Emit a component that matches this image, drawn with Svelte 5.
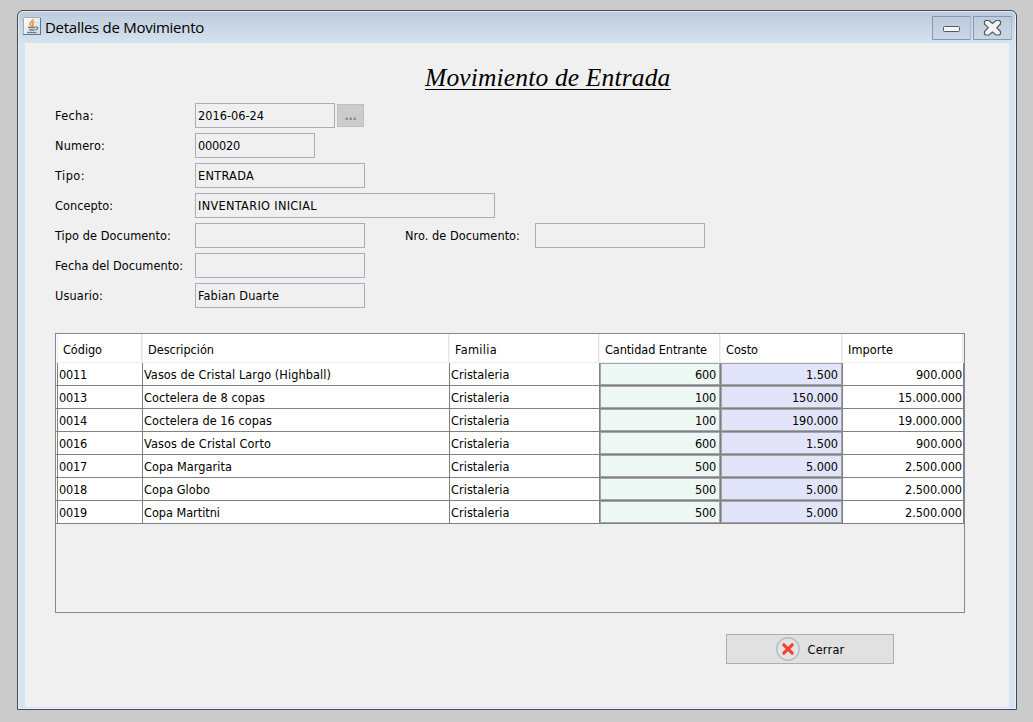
<script>
  const fields = [
    { label: 'Fecha:', lw: 39, value: '2016-06-24', vw: 66, width: 140, picker: true },
    { label: 'Numero:', lw: 50, value: '000020', vw: 42, width: 120 },
    { label: 'Tipo:', lw: 30, value: 'ENTRADA', vw: 56, width: 170 },
    { label: 'Concepto:', lw: 58, value: 'INVENTARIO INICIAL', vw: 119, width: 300 },
    { label: 'Tipo de Documento:', lw: 116, value: '', width: 170, extra: true },
    { label: 'Fecha del Documento:', lw: 128, value: '', width: 170 },
    { label: 'Usuario:', lw: 48, value: 'Fabian Duarte', vw: 81, width: 170 }
  ];
  const heads = [
    ['Código', 39], ['Descripción', 66], ['Familia', 42],
    ['Cantidad Entrante', 102], ['Costo', 32], ['Importe', 45]
  ];
  const rows = [
    ['0011', 'Vasos de Cristal Largo (Highball)', 187, '600', '1.500', '900.000'],
    ['0013', 'Coctelera de 8 copas', 121, '100', '150.000', '15.000.000'],
    ['0014', 'Coctelera de 16 copas', 128, '100', '190.000', '19.000.000'],
    ['0016', 'Vasos de Cristal Corto', 127, '600', '1.500', '900.000'],
    ['0017', 'Copa Margarita', 88, '500', '5.000', '2.500.000'],
    ['0018', 'Copa Globo', 66, '500', '5.000', '2.500.000'],
    ['0019', 'Copa Martitni', 76, '500', '5.000', '2.500.000']
  ];
  const numberWidth = (s) => [...s].reduce((w, c) => w + (c === '.' ? 4 : 7), 0);

  // Spaces the letters so that the text fills the given width.
  function fit(node, width) {
    if (!width) return;
    const natural = node.getBoundingClientRect().width;
    const spacing = (width - natural) / node.textContent.length;
    node.style.letterSpacing = spacing + 'px';
  }
</script>

<div class="desktop">
  <div class="window">
    <header class="titlebar">
      <svg class="java" width="18" height="18" viewBox="0 0 18 18">
        <defs>
          <linearGradient id="jg" x1="0" y1="0" x2="1" y2="1">
            <stop offset="0" stop-color="#fff" /><stop offset="1" stop-color="#d3d8dc" />
          </linearGradient>
        </defs>
        <rect x=".5" y=".5" width="17" height="17" rx="1" fill="url(#jg)" stroke="#9aabba" />
        <path d="M0 17.500h18M17.500 1v16" stroke="#597890" />
        <path d="M10 2.200C10 4.500 6.800 5 7 7c.1 1.100 1.200 1.500 1.500 2.500M11.500 4.800C9.500 5.800 9 6.600 9.800 7.500c.5.700.2 1.300-.5 1.800" fill="none" stroke="#ef8a2c" stroke-width="1.500" />
        <path d="M5 10.500h7.500M6.200 13h5.500" fill="none" stroke="#5f8198" stroke-width="1.500" />
        <path d="M4 15.500h9.500" fill="none" stroke="#5f8198" stroke-width="1.300" />
        <path d="M12.500 10c3.300-.5 3 2.600-.2 3" fill="none" stroke="#5f8198" stroke-width="1.200" />
      </svg>
      <h1><span use:fit={159}>Detalles de Movimiento</span></h1>
      <div class="controls">
        <button aria-label="Minimizar">
          <svg width="38" height="22" viewBox="0 0 38 22">
            <rect x="10.500" y="9.500" width="16" height="5" rx="1" fill="#f6f6f6" stroke="#54586c" />
          </svg>
        </button>
        <button aria-label="Cerrar ventana">
          <svg width="38" height="22" viewBox="0 0 38 22">
            <path d="M11.500 3.500H15L18.500 6.500 22 3.500h3.500l1 1V7L22.800 10.700l3.700 3.800v2.500l-1 1H22L18.500 15 15 18h-3.500l-1-1v-2.500l3.700-3.800L10.500 7V4.500z" fill="#f3f3f3" stroke="#54586c" stroke-width="1.200" />
          </svg>
        </button>
      </div>
    </header>

    <main>
      <h2><span use:fit={245.5}>Movimiento de Entrada</span></h2>
      <section class="form">
        {#each fields as f}
          <div class="line">
            <span class="label"><span use:fit={f.lw}>{f.label}</span></span>
            <span class="field" style:width="{f.width}px"><span use:fit={f.vw}>{f.value}</span></span>
            {#if f.picker}<button class="picker" disabled>...</button>{/if}
            {#if f.extra}
              <span class="label second"><span use:fit={115}>Nro. de Documento:</span></span>
              <span class="field last"></span>
            {/if}
          </div>
        {/each}
      </section>

      <section class="table">
        <div class="row head">
          {#each heads as [name, width]}
            <div><span use:fit={width}>{name}</span></div>
          {/each}
        </div>
        {#each rows as [code, name, width, amount, cost, total]}
          <div class="row">
            <div><span use:fit={28}>{code}</span></div>
            <div><span use:fit={width}>{name}</span></div>
            <div><span use:fit={58.5}>Cristaleria</span></div>
            <div class="num boxed green"><span use:fit={numberWidth(amount)}>{amount}</span></div>
            <div class="num boxed blue"><span use:fit={numberWidth(cost)}>{cost}</span></div>
            <div class="num"><span use:fit={numberWidth(total)}>{total}</span></div>
          </div>
        {/each}
      </section>

      <button class="close">
        <svg width="24" height="24" viewBox="0 0 24 24">
          <circle cx="12" cy="12" r="11.200" fill="#e2e4e5" stroke="#b0bec5" stroke-width="1.400" />
          <path d="M7.800 7.800l8.400 8.400M16.200 7.800l-8.400 8.400" stroke="#f44336" stroke-width="3.200" stroke-linecap="round" />
        </svg>
        <span class="caption" use:fit={37}>Cerrar</span>
      </button>
    </main>
  </div>
</div>

<style>
  :global(body) { margin: 0; }
  * { box-sizing: border-box; }
  .desktop {
    height: 722px;
    padding: 10px 16px 12px 17px;
    background: #cbcbcb;
    font: 12.6px/16px "DejaVu Sans Condensed", "DejaVu Sans", sans-serif;
    font-stretch: condensed;
    color: #000;
    white-space: nowrap;
    overflow: hidden;
  }
  .window {
    width: 1000px;
    height: 700px;
    border: 1px solid #48494e;
    border-radius: 6px 6px 0 0;
    background: linear-gradient(#bccbda, #d7e4f2 34px);
    box-shadow: inset 0 0 0 1px #e6eff8;
    display: flex;
    flex-direction: column;
    padding: 0 7px 2px;
  }
  .titlebar { height: 32px; display: flex; flex: none; }
  .java { margin: 6px 4px 0 -2px; }
  h1 {
    margin: 6px 0 0;
    font: 15px/20px "Open Sans", "Noto Sans", sans-serif;
    flex: 1;
  }
  .controls { display: flex; gap: 2px; margin: 5px -3px 0 0; }
  .controls button {
    width: 39px;
    height: 24px;
    padding: 0;
    border: 1px solid #8796b3;
    border-right-color: #a9b7cb;
    background: linear-gradient(#bdccdc, #c9d7e6);
    border-radius: 1px;
  }
  .controls svg { display: block; }
  main {
    flex: 1;
    background: #f0f0f0;
    padding: 0 30px;
    display: flex;
    flex-direction: column;
  }
  h2 {
    margin: 20px 0 0 370px;
    height: 40px;
    font: italic 25.5px/30px "Liberation Serif", serif;
  }
  h2 span { display: inline-block; height: 27px; border-bottom: 1px solid #000; }
  .form { display: flex; flex-direction: column; gap: 5px; }
  .line { display: flex; height: 25px; align-items: center; }
  .label { width: 140px; }
  .label.second { width: 130px; margin-left: 40px; }
  .field {
    height: 25px;
    border: 1px solid #abadb3;
    padding: 4px 2px;
  }
  .last { width: 170px; }
  .picker {
    width: 27px;
    height: 23px;
    margin-left: 2px;
    padding: 0;
    border: 1px solid #bfbfbf;
    background: #cccccc;
    color: #838383;
    font: inherit;
    font-weight: bold;
    letter-spacing: -.3px;
  }
  .table {
    height: 280px;
    width: 910px;
    margin-top: 25px;
    border: 1px solid #828790;
    flex: none;
  }
  .row {
    display: grid;
    grid-template-columns: 86px 307px 150px 121px 122px 121px;
    padding-left: 1px;
    height: 23px;
    background: #fff;
    border-bottom: 1px solid #808080;
  }
  .row > div { border-right: 1px solid #808080; padding: 4px 1px 0; line-height: 16px; }
  .row > div:first-child { border-left: 1px solid #808080; }
  .head { height: 29px; border-color: #eee; }
  .head > div { padding: 8px 5px 0; border-color: #f2f2f2; box-shadow: inset -1px 0 #e5e5e5; }
  .head > div:first-child { border-color: #eee; }
  .row > .num { text-align: right; padding-right: 1px; }
  .row > .boxed { box-shadow: inset 0 0 0 1px #a4a4ab; padding-right: 4px; }
  .green { background: #edf7f3; }
  .blue { background: #e2e5f9; }
  .close {
    width: 168px;
    height: 30px;
    margin: 21px 0 0 671px;
    padding: 0;
    background: #e1e1e1;
    border: 1px solid #adadad;
    font: inherit;
    color: #000;
    display: flex;
    align-items: center;
    justify-content: center;
    gap: 8px;
  }
  .caption { padding-top: 1px; }
</style>
